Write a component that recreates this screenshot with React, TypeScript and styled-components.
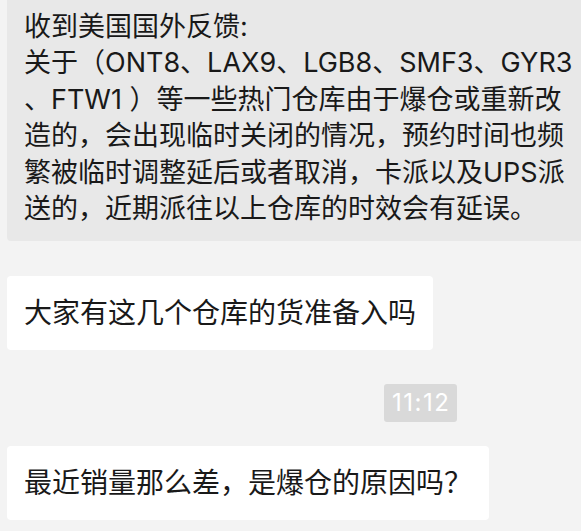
import React from 'react'
import styled, { createGlobalStyle } from 'styled-components'

const GlobalStyle = createGlobalStyle`
    html, body {
        margin: 0;
        padding: 0;
        background: #f3f3f3;
        overflow: hidden;
    }
    body {
        font-family: Inter, "Noto Sans CJK SC", sans-serif;
        color: #191919;
    }
`

const Chat = styled.div`
    display: flex;
    flex-direction: column;
    align-items: flex-start;
    width: 581px;
    height: 531px;
    overflow: hidden;
    padding-left: 7px;
    box-sizing: border-box;
`

const Bubble = styled.div<{ $tone?: 'gray' | 'white' }>`
    background: ${p => (p.$tone === 'gray' ? '#e8e8e8' : '#ffffff')};
    border-radius: 4px;
    padding: 19px 17px;
    font-size: 28px;
    line-height: 36px;
    white-space: nowrap;
    flex-shrink: 0;
`

const QuoteBubble = styled(Bubble)`
    width: 640px;
    padding: 9px 17px 14px;
    font-size: 27px;
    line-height: 36.4px;
    border-radius: 0 0 4px 4px;
`

const Time = styled.div`
    margin: 34px 0 24px 377px;
    padding: 0 7px 0 8px;
    height: 38px;
    line-height: 38px;
    background: #d9d9d9;
    color: #ffffff;
    font-size: 24px;
    letter-spacing: 1.5px;
    border-radius: 3px;
`

const lines = [
    '收到美国国外反馈:',
    '关于（ONT8、LAX9、LGB8、SMF3、GYR3',
    '、FTW1 ）等一些热门仓库由于爆仓或重新改',
    '造的，会出现临时关闭的情况，预约时间也频',
    '繁被临时调整延后或者取消，卡派以及UPS派',
    '送的，近期派往以上仓库的时效会有延误。',
]

export default function App() {
    return (
        <>
            <GlobalStyle />
            <Chat>
                <QuoteBubble $tone="gray">
                    {lines.map((l, i) => (
                        <div key={i}>{l}</div>
                    ))}
                </QuoteBubble>
                <Bubble style={{ marginTop: 35 }}>大家有这几个仓库的货准备入吗</Bubble>
                <Time>11:12</Time>
                <Bubble>最近销量那么差，是爆仓的原因吗？</Bubble>
            </Chat>
        </>
    )
}
